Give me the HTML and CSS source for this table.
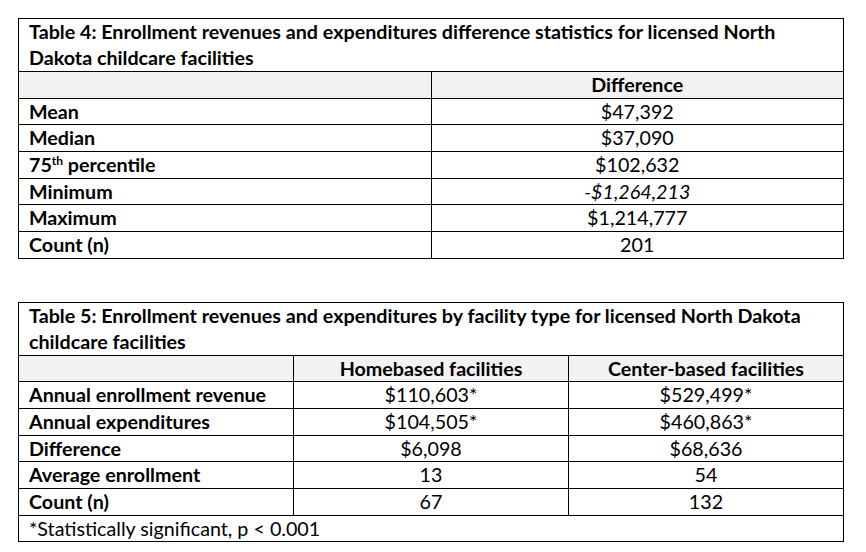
FILE: index.html
```html
<!DOCTYPE html>
<html>
<head>
<meta charset="utf-8">
<link rel="stylesheet" href="styles.css">
</head>
<body>
<table class="tbl tbl4">
  <tr><td class="title" colspan="2">Table 4: Enrollment revenues and expenditures difference statistics for licensed North Dakota childcare facilities</td></tr>
  <tr class="head"><td></td><td class="num">Difference</td></tr>
  <tr><td class="label">Mean</td><td class="num">$47,392</td></tr>
  <tr><td class="label">Median</td><td class="num">$37,090</td></tr>
  <tr><td class="label">75<sup>th</sup> percentile</td><td class="num">$102,632</td></tr>
  <tr><td class="label">Minimum</td><td class="num"><em>-$1,264,213</em></td></tr>
  <tr><td class="label">Maximum</td><td class="num">$1,214,777</td></tr>
  <tr><td class="label">Count (n)</td><td class="num">201</td></tr>
</table>

<table class="tbl tbl5">
  <tr><td class="title" colspan="3">Table 5: Enrollment revenues and expenditures by facility type for licensed North Dakota childcare facilities</td></tr>
  <tr class="head"><td></td><td class="num">Homebased facilities</td><td class="num">Center-based facilities</td></tr>
  <tr><td class="label">Annual enrollment revenue</td><td class="num">$110,603*</td><td class="num">$529,499*</td></tr>
  <tr><td class="label">Annual expenditures</td><td class="num">$104,505*</td><td class="num">$460,863*</td></tr>
  <tr><td class="label">Difference</td><td class="num">$6,098</td><td class="num">$68,636</td></tr>
  <tr><td class="label">Average enrollment</td><td class="num">13</td><td class="num">54</td></tr>
  <tr><td class="label">Count (n)</td><td class="num">67</td><td class="num">132</td></tr>
  <tr><td class="note" colspan="3">*Statistically significant, p &lt; 0.001</td></tr>
</table>
</body>
</html>
```

FILE: styles.css
```css
html, body {
  margin: 0;
  padding: 0;
  background: #ffffff;
}

body {
  padding: 18px 0 0 18px;
  font-family: "Lato", "Liberation Sans", sans-serif;
  font-size: 19.7px;
  color: #000000;
}

.tbl {
  border-collapse: collapse;
  width: 826px;
  table-layout: fixed;
}

.tbl5 {
  margin-top: 43px;
}

.tbl td {
  border: 1px solid #000000;
  padding: 0 10px;
  line-height: 25.67px;
  height: 25.67px;
  box-sizing: content-box;
  vertical-align: middle;
  white-space: nowrap;
}

.tbl td.title {
  font-weight: 700;
  white-space: normal;
  line-height: 26px;
  padding-right: 20px;
}

.head td {
  background: #f2f2f2;
  font-weight: 700;
}

.tbl td.label {
  font-weight: 700;
}

.tbl td.num {
  text-align: center;
}

.tbl td.note {
  font-weight: 400;
}

.tbl em {
  font-style: italic;
}

sup {
  font-size: 12px;
  line-height: 0;
  vertical-align: 7px;
}
```
